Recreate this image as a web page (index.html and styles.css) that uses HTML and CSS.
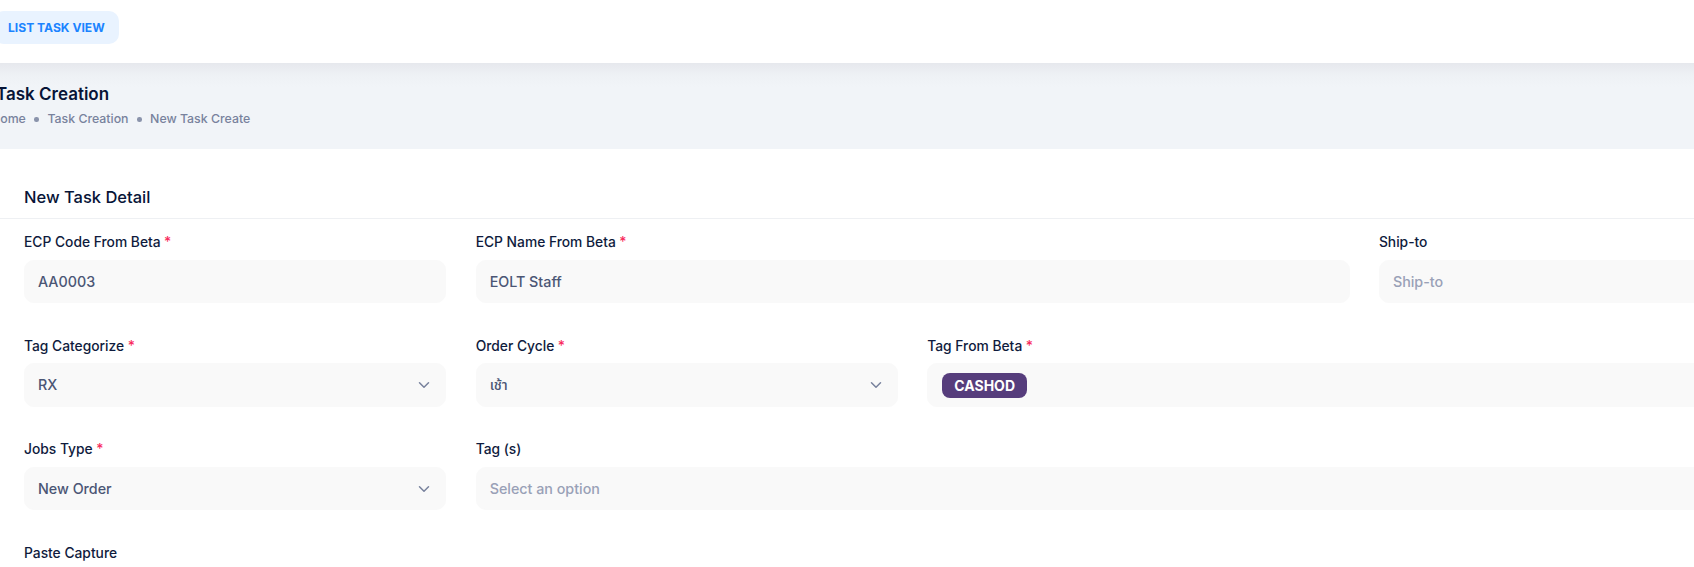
FILE: index.html
```html
<!DOCTYPE html>
<html lang="en">
<head>
<meta charset="utf-8">
<title>Task Creation</title>
<link rel="stylesheet" href="styles.css">
</head>
<body>
<div class="page">
  <header class="topbar">
    <button class="btn-light-primary" type="button">LIST TASK VIEW</button>
  </header>

  <section class="toolbar">
    <h1 class="page-title">Task Creation</h1>
    <ul class="breadcrumb">
      <li>Home</li>
      <li class="dot"></li>
      <li>Task Creation</li>
      <li class="dot"></li>
      <li>New Task Create</li>
    </ul>
  </section>

  <section class="card">
    <div class="card-header">
      <h2 class="card-title">New Task Detail</h2>
    </div>
    <div class="card-body">
      <div class="form-grid">
        <div class="field">
          <label class="form-label required">ECP Code From Beta</label>
          <div class="form-control">AA0003</div>
        </div>
        <div class="field span-2">
          <label class="form-label required">ECP Name From Beta</label>
          <div class="form-control">EOLT Staff</div>
        </div>
        <div class="field">
          <label class="form-label">Ship-to</label>
          <div class="form-control placeholder">Ship-to</div>
        </div>

        <div class="field">
          <label class="form-label required">Tag Categorize</label>
          <div class="form-control select">
            <span>RX</span>
            <svg class="chevron" viewBox="0 0 16 16" width="16" height="12"><path d="M2 5l6 6 6-6"/></svg>
          </div>
        </div>
        <div class="field">
          <label class="form-label required">Order Cycle</label>
          <div class="form-control select">
            <span class="thai">เช้า</span>
            <svg class="chevron" viewBox="0 0 16 16" width="16" height="12"><path d="M2 5l6 6 6-6"/></svg>
          </div>
        </div>
        <div class="field span-2">
          <label class="form-label required">Tag From Beta</label>
          <div class="form-control tags">
            <span class="chip">CASHOD</span>
          </div>
        </div>

        <div class="field">
          <label class="form-label required">Jobs Type</label>
          <div class="form-control select">
            <span>New Order</span>
            <svg class="chevron" viewBox="0 0 16 16" width="16" height="12"><path d="M2 5l6 6 6-6"/></svg>
          </div>
        </div>
        <div class="field span-3">
          <label class="form-label">Tag (s)</label>
          <div class="form-control placeholder">Select an option</div>
        </div>

        <div class="field">
          <label class="form-label">Paste Capture</label>
          <div class="paste-area"></div>
        </div>
      </div>
    </div>
  </section>
</div>
</body>
</html>
```

FILE: styles.css
```css
html, body {
  margin: 0;
  padding: 0;
  overflow: hidden;
  background: #ffffff;
}

body {
  font-family: Inter, "Noto Sans", "Noto Sans Thai", sans-serif;
  color: #071437;
}

.page {
  width: 1850px;
  margin-left: -8px;
}

/* top bar */
.topbar {
  height: 63px;
  box-sizing: border-box;
  padding-top: 11px;
  padding-left: 2px;
  background: #ffffff;
}

.btn-light-primary {
  height: 33px;
  padding: 0 14px;
  border: 0;
  border-radius: 10px;
  background: #e9f3ff;
  color: #1b84ff;
  font-family: Inter, sans-serif;
  font-size: 12.1px;
  font-weight: 700;
  letter-spacing: 0;
  cursor: pointer;
}

/* toolbar */
.toolbar {
  height: 86px;
  box-sizing: border-box;
  padding: 20.8px 0 0 4px;
  background: linear-gradient(to bottom, #e6e8ed 0px, #eef1f5 12px, #f1f4f8 24px, #f1f4f8 100%);
}

.page-title {
  margin: 0;
  font-size: 17px;
  line-height: 21px;
  font-weight: 600;
  color: #071437;
}

.breadcrumb {
  list-style: none;
  margin: 5.5px 0 0 -5px;
  padding: 0;
  display: flex;
  align-items: center;
  gap: 8.5px;
  font-size: 12.35px;
  line-height: 18.5px;
  font-weight: 500;
  color: #78829d;
}

.breadcrumb .dot {
  width: 4.5px;
  height: 4.5px;
  border-radius: 50%;
  background: #8a93ab;
}

/* card */
.card {
  background: #ffffff;
  border-radius: 12px 12px 0 0;
}

.card-header {
  height: 70px;
  box-sizing: border-box;
  padding: 36px 32px 0 32px;
  border-bottom: 1px solid #eef0f3;
}

.card-title {
  margin: 0;
  font-size: 16.5px;
  line-height: 24px;
  font-weight: 500;
  color: #071437;
}

.card-body {
  padding: 13.3px 32px 40px 32px;
}

.form-grid {
  display: grid;
  grid-template-columns: repeat(4, 422.4px);
  column-gap: 29.25px;
  row-gap: 32.4px;
}

.span-2 { grid-column: span 2; }
.span-3 { grid-column: span 3; }

.field {
  display: flex;
  flex-direction: column;
}

.form-label {
  display: block;
  margin-bottom: 7px;
  font-size: 13.8px;
  line-height: 20.5px;
  font-weight: 500;
  color: #0f1b3d;
}

.form-label.required::after {
  content: "*";
  padding-left: 3.5px;
  color: #f8285a;
}

.form-control {
  box-sizing: border-box;
  height: 43.6px;
  padding: 0 13px;
  display: flex;
  align-items: center;
  border: 1px solid #f9f9f9;
  border-radius: 10px;
  background: #f9f9f9;
  font-size: 14.3px;
  line-height: 21.45px;
  font-weight: 500;
  color: #4b5675;
}

.form-control.placeholder {
  color: #99a1b7;
}

.form-control.select {
  justify-content: space-between;
  padding-right: 13px;
}

.chevron {
  flex: none;
  fill: none;
  stroke: #78829d;
  stroke-width: 2;
  stroke-linecap: round;
  stroke-linejoin: round;
}

.form-control.tags {
  padding-left: 14px;
}

.chip {
  display: inline-flex;
  align-items: center;
  height: 25px;
  padding: 0 12px;
  border-radius: 8px;
  background: #563d7c;
  color: #ffffff;
  font-size: 14px;
  font-weight: 700;
  line-height: 25px;
}

.paste-area {
  height: 120px;
}
```
